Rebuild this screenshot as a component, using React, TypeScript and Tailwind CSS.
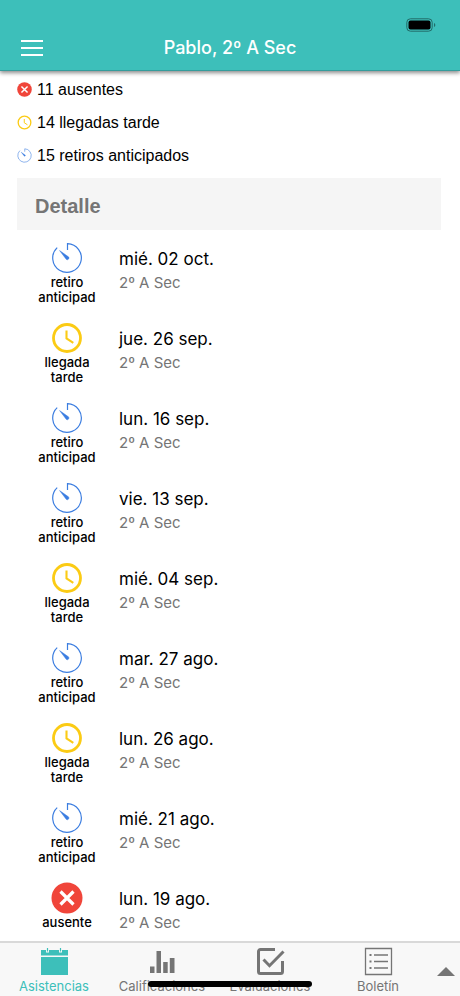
import React from 'react';

type Kind = 'retiro' | 'tarde' | 'ausente';

const entries: { kind: Kind; date: string }[] = [
  { kind: 'retiro', date: 'mié. 02 oct.' },
  { kind: 'tarde', date: 'jue. 26 sep.' },
  { kind: 'retiro', date: 'lun. 16 sep.' },
  { kind: 'retiro', date: 'vie. 13 sep.' },
  { kind: 'tarde', date: 'mié. 04 sep.' },
  { kind: 'retiro', date: 'mar. 27 ago.' },
  { kind: 'tarde', date: 'lun. 26 ago.' },
  { kind: 'retiro', date: 'mié. 21 ago.' },
  { kind: 'ausente', date: 'lun. 19 ago.' },
];

const summary: { kind: Kind; text: string }[] = [
  { kind: 'ausente', text: '11 ausentes' },
  { kind: 'tarde', text: '14 llegadas tarde' },
  { kind: 'retiro', text: '15 retiros anticipados' },
];

const labels: Record<Kind, string[]> = {
  retiro: ['retiro', 'anticipad'],
  tarde: ['llegada', 'tarde'],
  ausente: ['ausente'],
};

const KindIcon = ({ kind, className }: { kind: Kind; className: string }) => {
  if (kind === 'ausente') {
    return (
      <svg viewBox="0 0 32 32" className={className} aria-hidden="true">
        <circle cx="16" cy="16" r="15.5" fill="#f0453a" />
        <path d="M9.5 9.5l13 13M22.5 9.5l-13 13" stroke="#fff" strokeWidth="3.2" fill="none" />
      </svg>
    );
  }
  if (kind === 'tarde') {
    return (
      <svg viewBox="0 0 32 32" className={className} aria-hidden="true" fill="none" stroke="#fbcb14">
        <circle cx="16" cy="16" r="13.5" strokeWidth="2.8" />
        <path d="M15.5 8.5v8l6.8 4.4" strokeWidth="2.1" />
      </svg>
    );
  }
  return (
    <svg viewBox="0 0 32 32" className={className} aria-hidden="true">
      <path d="M16.5 8V1.7A14.3 14.3 0 1 1 6.2 5.6" fill="none" stroke="#3b7de0" strokeWidth="1.2" />
      <path d="M8.6 8.6l8.8 6.2a1.6 1.6 0 0 1-2.2 2.4z" fill="#3b7de0" stroke="#3b7de0" strokeWidth="0.5" />
    </svg>
  );
};

const Header = () => (
  <header className="relative z-10 shrink-0 bg-[#3dbfba] pt-6 border-b border-[#359c9c] shadow-[0_2px_4px_rgba(0,0,0,0.45)]">
    <svg viewBox="0 0 30 14" className="absolute right-6 top-[18px] w-[30px] h-3.5" aria-hidden="true">
      <rect x="0.8" y="0.8" width="25.4" height="12.4" rx="3.6" fill="none" stroke="#226c69" />
      <rect x="2.5" y="2.5" width="22" height="9" rx="2" fill="#000" />
      <path d="M28 5v4c1.8-.7 1.8-3.3 0-4z" fill="#226c69" />
    </svg>
    <div className="grid grid-cols-[64px_1fr_64px] items-center h-[46px] pt-0.5">
      <button type="button" aria-label="Menú" className="flex justify-center">
        <svg viewBox="0 0 24 18" className="w-6 h-[18px]" stroke="#fff" strokeWidth="2">
          <path d="M1 2h22M1 9h22M1 16h22" />
        </svg>
      </button>
      <h1 className="font-[Inter,sans-serif] text-center text-[18px] leading-6 font-medium text-white">Pablo, 2º A Sec</h1>
    </div>
  </header>
);

const tabs = [
  {
    name: 'Asistencias',
    icon: (
      <>
        <path d="M1 3h5v2.5h3V3h10v2.5h3V3h6v5.5H1zM1 10h27v18H1z" fill="currentColor" />
        <path d="M7.5 1v3.5M20.5 1v3.5" stroke="currentColor" strokeWidth="1.2" />
      </>
    ),
  },
  {
    name: 'Calificaciones',
    icon: <path d="M2 19.5h4.5V26H2zM8.5 4H13v22H8.5zM15.2 15h4.5v11h-4.5zM21.8 11h4.7v15h-4.7z" fill="currentColor" />,
  },
  {
    name: 'Evaluaciones',
    icon: (
      <path
        d="M19 2.5H4.5a2 2 0 0 0-2 2v20a2 2 0 0 0 2 2h20a2 2 0 0 0 2-2V14M7.5 12.5l6 6.2L27.5 4.5"
        fill="none"
        stroke="currentColor"
        strokeWidth="3"
      />
    ),
  },
  {
    name: 'Boletín',
    icon: (
      <g fill="none" stroke="currentColor" strokeWidth="1.3">
        <path d="M1.5 1.5h26v26h-26zM10 8h14M10 14.5h14M10 21h14" />
        <path d="M5.5 8h2M5.5 14.5h2M5.5 21h2" strokeWidth="2" />
      </g>
    ),
  },
];

const TabBar = () => (
  <nav className="relative shrink-0 flex bg-[#f8f8f8] border-t-2 border-[#d9d9d9] h-[55px]">
    {tabs.map((tab, i) => (
      <a
        key={tab.name}
        href="#"
        className={`flex-1 min-w-0 flex flex-col items-center pt-1 ${i === 0 ? 'text-[#3dbfba]' : 'text-[#757575]'}`}
      >
        <svg viewBox="0 0 29 29" className="w-[29px] h-[29px] shrink-0" aria-hidden="true">
          {tab.icon}
        </svg>
        <span className="font-[Inter,sans-serif] text-[13px] leading-5">{tab.name}</span>
      </a>
    ))}
    <button type="button" aria-label="Más" className="w-7 flex justify-center items-center pt-1 text-[#757575]">
      <svg viewBox="0 0 18 9" className="w-[18px] h-[9px]">
        <path d="M9 0l9 9H0z" fill="currentColor" />
      </svg>
    </button>
    <div className="absolute bottom-[9px] left-1/2 -translate-x-1/2 w-[164px] h-1.5 rounded-full bg-black" />
  </nav>
);

const App = () => {
  return (
    <div className="h-screen flex flex-col bg-white text-black font-['Liberation_Sans',Arial,sans-serif]">
      <Header />
      <main className="flex-1 min-h-0 overflow-hidden pl-[17px] pr-[19px] pt-0.5">
        <ul className="mb-1.5">
          {summary.map((item) => (
            <li key={item.kind} className="flex items-center gap-[5px] h-[33px] text-base">
              <KindIcon kind={item.kind} className="w-[15px] h-[15px]" />
              {item.text}
            </li>
          ))}
        </ul>
        <h2 className="bg-[#f5f5f5] px-[18px] pt-4 pb-3 text-xl leading-6 font-bold text-[#757575]">Detalle</h2>
        <ul className="font-[Inter,sans-serif]">
          {entries.map((entry) => (
            <li key={entry.date} className="flex h-20 pt-3">
              <div className="w-[100px] shrink-0 flex flex-col items-center text-center text-[13px] leading-[15px] font-medium">
                <KindIcon kind={entry.kind} className="w-8 h-8 mb-px" />
                {labels[entry.kind].map((line) => (
                  <span key={line}>{line}</span>
                ))}
              </div>
              <div className="flex-1 pt-[5px] pl-0.5">
                <p className="text-[17px] leading-6">{entry.date}</p>
                <p className="text-[15px] leading-6 text-[#757575]">2º A Sec</p>
              </div>
            </li>
          ))}
        </ul>
      </main>
      <TabBar />
    </div>
  );
};

export default App;
